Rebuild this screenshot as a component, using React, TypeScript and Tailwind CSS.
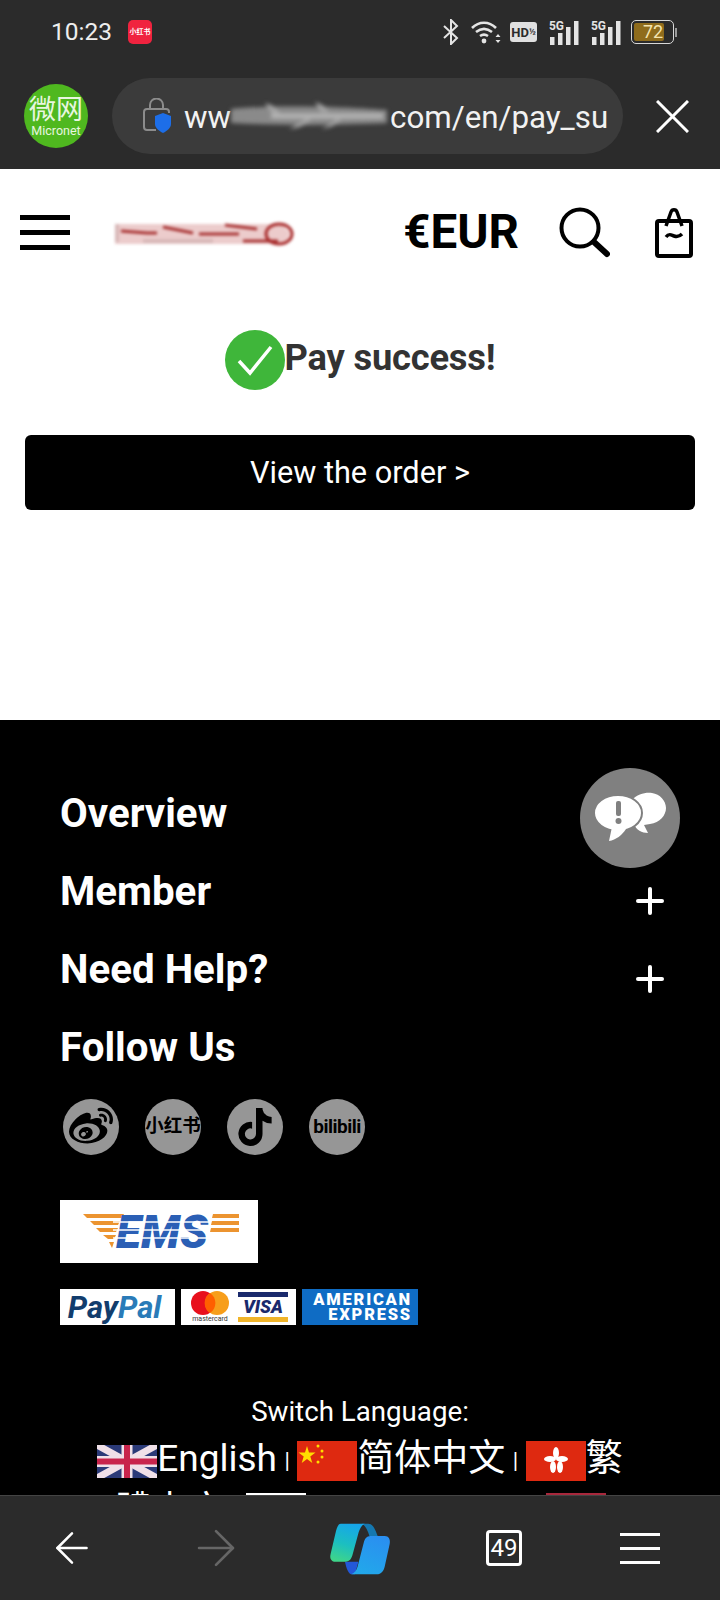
import { ArrowLeft, ArrowRight } from 'lucide-react';
import { FaWeibo, FaTiktok } from 'react-icons/fa';

const font = { fontFamily: 'Roboto, "Noto Sans CJK SC", sans-serif' };

function Bars() {
  return (
    <svg width="31" height="26" viewBox="0 0 31 26" fill="#e4e4e4">
      <text x="0" y="11" fontSize="13" fontWeight="700" fontFamily="Roboto" textLength="15" lengthAdjust="spacingAndGlyphs">5G</text>
      <rect x="1" y="18" width="4.500" height="8" />
      <rect x="9" y="14" width="4.500" height="12" />
      <rect x="17" y="8" width="4.500" height="18" />
      <rect x="25" y="2" width="4.500" height="24" />
    </svg>
  );
}

function StatusIcons() {
  return (
    <div className="ml-auto flex items-center">
      <svg width="16" height="26" viewBox="0 0 16 26" fill="none" stroke="#e4e4e4" strokeWidth="2">
        <path d="M1 7l13 12-6 6V1l6 6L1 19" />
      </svg>
      <svg className="ml-[12px]" width="30" height="24" viewBox="0 0 30 24" fill="none" stroke="#e4e4e4" strokeWidth="2.600">
        <path d="M1 8c7-7 17-7 24 0M5 12c5-4 11-4 16 0M9 16c3-2 5-2 8 0" />
        <circle cx="13" cy="21" r="2.400" fill="#e4e4e4" stroke="none" />
        <path d="M27 14l-2.500 3h5zM27 23l-2.500-3h5z" fill="#e4e4e4" stroke="none" />
      </svg>
      <div className="ml-[9px] flex h-[20px] w-[27px] items-center justify-center rounded-[3px] bg-[#e0e0e0] text-[13px] leading-none font-bold text-[#2b2b2b]">
        HD<span className="text-[9px]">½</span>
      </div>
      <div className="ml-[12px]"><Bars /></div>
      <div className="ml-[11px]"><Bars /></div>
      <div className="ml-[9px] flex items-center">
        <div className="flex h-[24px] w-[43px] items-center rounded-[5px] border border-[#d8d8d8] p-[2px]">
          <div className="flex h-full w-[30px] items-center justify-start rounded-[2px] bg-[#8f6c1c] pl-[9px] text-[18px] leading-none text-[#f4e4b0]">72</div>
        </div>
        <div className="ml-[1px] h-[9px] w-[2px] bg-[#9a9a9a]" />
      </div>
    </div>
  );
}

function TopBar() {
  return (
    <div className="h-[169px] shrink-0 bg-[#2b2b2b] text-white">
      <div className="flex h-[64px] items-center pr-[43px] pl-[51px]">
        <span className="text-[24.500px] leading-none text-[#eeeeee]">10:23</span>
        <div className="ml-[16px] flex h-[24px] w-[24px] items-center justify-center rounded-[5px] bg-[#f0233f] text-[7px] leading-none font-bold text-white">小红书</div>
        <StatusIcons />
      </div>
      <div className="mt-[14px] flex items-center pl-[24px]">
        <div className="flex h-[64px] w-[64px] flex-col items-center justify-center rounded-full bg-[#4fb81f] text-[#e8f6e0]">
          <span className="text-[27px] leading-[28px]">微网</span>
          <span className="text-[12.500px] leading-[13px]">Micronet</span>
        </div>
        <div className="ml-[24px] flex h-[76px] w-[511px] items-center rounded-full bg-[#3b3b3b] pl-[30px]">
          <svg width="30" height="36" viewBox="0 0 30 36" fill="none">
            <path d="M8 11V7a6.500 6.500 0 0 1 13 0v4" stroke="#8c8c8c" strokeWidth="2" />
            <path d="M14 32H5a3 3 0 0 1-3-3V14a3 3 0 0 1 3-3h19a3 3 0 0 1 3 3v1" stroke="#8c8c8c" strokeWidth="2" />
            <path d="M21 15l8 3v8c0 4-4 7-8 9-4-2-8-5-8-9v-8z" fill="#1d6ee8" />
          </svg>
          <span className="ml-[12px] pt-[3px] text-[31.300px] leading-none text-[#f2f2f2]">ww</span>
          <svg className="blur-[2px]" width="156" height="32" viewBox="0 0 156 32">
            <path d="M0 9c30-3 70-3 100-2s40 2 56 3v13c-40 2-100 3-156 0z" fill="#8a8a8a" />
            <path d="M34 3c10 2 14 8 16 12l-8 0zM84 2c10 3 12 7 14 10h-8zM58 29c8-4 14-8 18-12l4 2c-4 5-10 9-22 10zM90 29c8-3 12-7 16-11l4 2c-4 4-10 8-20 9z" fill="#a6a6a6" />
            <path d="M40 16h112" stroke="#b4b4b4" strokeWidth="5" />
          </svg>
          <span className="ml-[3px] pt-[3px] text-[31.300px] leading-none text-[#f2f2f2]">com/en/pay_su</span>
        </div>
        <svg className="ml-[33px]" width="33" height="33" viewBox="0 0 33 33" fill="none" stroke="#ffffff" strokeWidth="3">
          <path d="M1 1l31 31M32 1L1 32" />
        </svg>
      </div>
    </div>
  );
}

function ShopHeader() {
  return (
    <div className="flex h-[127px] items-center pr-[27px] pl-[20px]">
      <div className="flex w-[50px] flex-col gap-[10px]">
        <div className="h-[5px] bg-black" />
        <div className="h-[5px] bg-black" />
        <div className="h-[5px] bg-black" />
      </div>
      <svg className="mt-[2px] ml-[43px] blur-[1.800px]" width="182" height="26" viewBox="0 0 182 26" fill="none">
        <path d="M2 3l165 0 10 8-4 12L2 23z" fill="#eccccc" />
        <path d="M8 10l26 2h10M50 6l30 6M86 13h40M112 4l32 4M130 20h35" stroke="#a83232" strokeWidth="3" />
        <path d="M4 3v18M30 20h70" stroke="#d8b8b8" strokeWidth="4" />
        <ellipse cx="166" cy="13" rx="13" ry="10" stroke="#a82a2a" strokeWidth="3" />
      </svg>
      <span className="ml-auto text-[47.500px] leading-none font-bold text-black">€EUR</span>
      <svg className="ml-[39px]" width="52" height="52" viewBox="0 0 52 52" fill="none" stroke="#000000" strokeLinecap="round">
        <circle cx="22" cy="21" r="18.500" strokeWidth="4" />
        <path d="M36 35l13 12" strokeWidth="6" />
      </svg>
      <svg className="ml-[45px]" width="38" height="52" viewBox="0 0 38 52" fill="none" stroke="#000000" strokeWidth="4" strokeLinejoin="round">
        <rect x="2" y="14" width="34" height="35" rx="2" />
        <path d="M11 19l5-14c1-3 5-3 6 0l5 14" strokeWidth="3.500" />
        <path d="M11 30c3-4 5-2 8-1s5 1 8-2" strokeWidth="3.500" />
      </svg>
    </div>
  );
}

function PaySuccess() {
  return (
    <div className="h-[424px] bg-white">
      <div className="mt-[34px] flex items-center justify-center">
        <svg width="60" height="60" viewBox="0 0 60 60">
          <circle cx="30" cy="30" r="30" fill="#3fb63a" />
          <path d="M14 31l11 12 21-26" fill="none" stroke="#ffffff" strokeWidth="3.500" />
        </svg>
        <span className="pb-[4px] text-[36.300px] leading-none font-bold tracking-[-0.2px] text-[#333333]">Pay success!</span>
      </div>
      <div className="mx-[25px] mt-[45px] flex h-[75px] items-center justify-center rounded-[6px] bg-black pt-[2px] text-[30.700px] text-white">
        View the order &gt;
      </div>
    </div>
  );
}

function FooterRow({ label, plus }: { label: string; plus?: boolean }) {
  return (
    <div className="flex h-[78px] items-center justify-between text-[40.300px] font-bold text-white">
      <span className="pt-[3px]">{label}</span>
      {plus && (
        <div className="relative mt-[20px] mr-[56px] h-[28px] w-[28px]">
          <div className="absolute top-[12px] left-0 h-[4px] w-[28px] rounded-full bg-white" />
          <div className="absolute top-0 left-[12px] h-[28px] w-[4px] rounded-full bg-white" />
        </div>
      )}
    </div>
  );
}

function FeedbackBadge() {
  return (
    <div className="absolute top-[48px] right-[40px] flex h-[100px] w-[100px] items-center justify-center rounded-full bg-[#808080]">
      <svg width="72" height="54" viewBox="0 0 72 54">
        <path d="M38 9c5-6 14-8 20-7 8 1 14 8 14 15s-6 15-16 16l-6 1 4 8c-6 0-12-3-14-9z" fill="#ffffff" />
        <ellipse cx="24" cy="22" rx="24" ry="18" fill="#ffffff" stroke="#808080" strokeWidth="2" />
        <path d="M18 36l-3 14c7-1 13-6 17-12z" fill="#ffffff" />
        <rect x="22" y="10" width="5" height="15" rx="2" fill="#808080" />
        <circle cx="24.500" cy="30" r="3" fill="#808080" />
      </svg>
    </div>
  );
}

function SocialIcons() {
  const circle = 'flex h-[56px] w-[56px] items-center justify-center overflow-hidden rounded-full bg-[#969696] text-black';
  return (
    <div className="mt-[13px] ml-[3px] flex gap-[26px]">
      <div className={circle}><FaWeibo size={44} /></div>
      <div className={`${circle} text-[18.500px] font-bold whitespace-nowrap`}>小红书</div>
      <div className={circle}><FaTiktok size={38} /></div>
      <div className={`${circle} text-[19px] font-bold tracking-[-0.5px]`}>bilibili</div>
    </div>
  );
}

function EmsLogo() {
  return (
    <div className="mt-[45px] flex h-[63px] w-[198px] items-center justify-center bg-white pl-[4px]">
      <svg width="156" height="38" viewBox="0 0 156 38">
        <path d="M0 1h41l-2 4H4zM7 8h30l-2 4H11zM13 15h22l-2 4H17zM20 22h13l-2 4h-6zM26 29h5l-2 6z" fill="#ec9430" />
        <path d="M130 1h26v4h-27zM129 8h27v4h-28zM128 15h28v4h-29z" fill="#ec9430" />
        <text x="33" y="35" fontSize="47" fontWeight="900" fontStyle="italic" fontFamily="Roboto" fill="#2b5fb5" textLength="92" lengthAdjust="spacingAndGlyphs">EMS</text>
        <path d="M30 9h96M30 17h96M30 25h96" stroke="#ffffff" strokeWidth="1.500" />
      </svg>
    </div>
  );
}

function PaymentLogos() {
  return (
    <div className="mt-[26px] flex gap-[6px]">
      <div className="flex h-[36px] w-[115px] items-center justify-center bg-white pr-[6px] text-[31px] leading-none font-bold italic">
        <span className="text-[#123d6d]">Pay</span>
        <span className="text-[#2a7bb8]">Pal</span>
      </div>
      <div className="flex h-[36px] w-[115px] items-center bg-white pl-[10px]">
        <div className="flex flex-col items-center">
          <svg width="38" height="24" viewBox="0 0 38 24">
            <circle cx="12" cy="12" r="12" fill="#e8101c" />
            <circle cx="26" cy="12" r="12" fill="#f79e1b" />
            <path d="M19 2a12 12 0 0 1 0 20 12 12 0 0 1 0-20z" fill="#ff5f00" />
          </svg>
          <span className="text-[7px] leading-[8px] text-[#333333]">mastercard</span>
        </div>
        <div className="ml-[9px] flex h-full w-[50px] flex-col justify-between py-[3px]">
          <div className="h-[5px] bg-[#1a2a6c]" />
          <div className="text-center text-[18px] leading-none font-black text-[#1a2a6c] italic">VISA</div>
          <div className="h-[5px] bg-[#f0b429]" />
        </div>
      </div>
      <div className="flex h-[36px] w-[116px] flex-col items-end justify-center bg-[#0f6cc4] pr-[6px] text-[16.500px] leading-[15px] font-black tracking-[1.800px] text-white">
        <span>AMERICAN</span>
        <span>EXPRESS</span>
      </div>
    </div>
  );
}

function LangFlag({ children, short }: { children: React.ReactNode; short?: boolean }) {
  return (
    <svg
      className={short ? 'inline-block h-[33px] w-[60px] align-middle' : 'inline-block h-[40px] w-[60px] align-middle'}
      viewBox={short ? '0 0 60 33' : '0 0 60 40'}
      preserveAspectRatio="none"
    >
      {children}
    </svg>
  );
}

function LanguageSwitch() {
  const sep = <span className="mx-[7.500px] align-middle text-[22px] text-white">|</span>;
  return (
    <div className="mt-[66px] -ml-[60px] text-center text-white">
      <div className="pt-[1px] pb-[2px] text-[27.700px] leading-[40px]">Switch Language:</div>
      <div className="mx-auto w-[540px] text-[37px] leading-[50px]">
        <LangFlag short>
          <rect width="60" height="33" fill="#2b3a78" />
          <path d="M0 0l60 33M60 0L0 33" stroke="#f0e0e8" strokeWidth="7" />
          <path d="M30 0v33M0 16.500h60" stroke="#f0e0e8" strokeWidth="11" />
          <path d="M30 0v33M0 16.500h60" stroke="#c8244c" strokeWidth="6" />
        </LangFlag>
        English{sep}
        <LangFlag>
          <rect width="60" height="40" fill="#de2910" />
          <path d="M10 5l2 6.500h6.500l-5.200 4 2 6.500-5.300-4-5.300 4 2-6.500-5.200-4H8z" fill="#ffde00" />
          <circle cx="21" cy="5" r="1.500" fill="#ffde00" />
          <circle cx="25" cy="10" r="1.500" fill="#ffde00" />
          <circle cx="25" cy="16" r="1.500" fill="#ffde00" />
          <circle cx="21" cy="21" r="1.500" fill="#ffde00" />
        </LangFlag>
        简体中文{sep}
        <LangFlag>
          <rect width="60" height="40" fill="#de2910" />
          <g fill="#ffffff">
            <ellipse cx="30" cy="12" rx="3" ry="6" />
            <ellipse cx="24" cy="18" rx="6" ry="3" />
            <ellipse cx="36" cy="18" rx="6" ry="3" />
            <ellipse cx="27" cy="26" rx="3" ry="6" />
            <ellipse cx="34" cy="26" rx="3" ry="6" />
          </g>
        </LangFlag>
        繁體中文{sep}
        <LangFlag>
          <rect width="60" height="40" fill="#ffffff" />
        </LangFlag>
        <span className="mx-[40px]">Japanese</span>
        <LangFlag>
          <rect width="60" height="40" fill="#a8283c" />
        </LangFlag>
      </div>
    </div>
  );
}

function Footer() {
  return (
    <div className="relative flex-1 overflow-hidden bg-black pt-[54px] pl-[60px]">
      <FeedbackBadge />
      <FooterRow label="Overview" />
      <FooterRow label="Member" plus />
      <FooterRow label="Need Help?" plus />
      <FooterRow label="Follow Us" />
      <SocialIcons />
      <EmsLogo />
      <PaymentLogos />
      <LanguageSwitch />
    </div>
  );
}

function BrowserBar() {
  return (
    <div className="flex h-[105px] shrink-0 items-center border-t border-[#444444] bg-[#2b2b2b]">
      <div className="flex w-[144px] justify-center"><ArrowLeft size={50} strokeWidth={1.200} color="#ffffff" /></div>
      <div className="flex w-[144px] justify-center"><ArrowRight size={58} strokeWidth={1.100} color="#666666" /></div>
      <div className="flex w-[144px] justify-center">
        <svg width="80" height="75" viewBox="0 0 240 225">
          <defs>
            <linearGradient id="copA" x1="0.600" y1="0" x2="0.300" y2="1">
              <stop offset="0" stopColor="#16a6ea" />
              <stop offset="0.550" stopColor="#1cbfc0" />
              <stop offset="1" stopColor="#3ed58a" />
            </linearGradient>
            <linearGradient id="copB" x1="0.700" y1="0" x2="0.300" y2="1">
              <stop offset="0" stopColor="#2a8ff0" />
              <stop offset="1" stopColor="#22a8ea" />
            </linearGradient>
          </defs>
          <path d="M125 38h20c12 0 20 14 28 37h-25c-4-14-10-30-23-37z" fill="#1578b0" />
          <path d="M75 152h40l-10 38h-8c-12 0-18-18-22-38z" fill="#2358d8" />
          <path d="M62 38h72c-10 6-14 14-18 26l-18 66c-3 12-8 22-22 22H46c-12 0-18-10-14-24l16-68c4-14 8-22 14-22z" fill="url(#copA)" />
          <path d="M152 75h42c12 0 18 10 15 24l-15 68c-3 12-10 23-24 23H94c10-4 16-12 19-24l18-70c3-12 8-21 21-21z" fill="url(#copB)" />
        </svg>
      </div>
      <div className="flex w-[144px] justify-center">
        <div className="flex h-[36px] w-[36px] items-center justify-center rounded-[4px] border-[3px] border-white text-[24px] leading-none text-white">49</div>
      </div>
      <div className="flex w-[144px] justify-center pr-[16px]">
        <div className="flex w-[40px] flex-col gap-[11px]">
          <div className="h-[3px] bg-white" />
          <div className="h-[3px] bg-white" />
          <div className="h-[3px] bg-white" />
        </div>
      </div>
    </div>
  );
}

export default function App() {
  return (
    <div className="flex h-[1600px] w-[720px] flex-col overflow-hidden bg-white" style={font}>
      <TopBar />
      <ShopHeader />
      <PaySuccess />
      <Footer />
      <BrowserBar />
    </div>
  );
}
